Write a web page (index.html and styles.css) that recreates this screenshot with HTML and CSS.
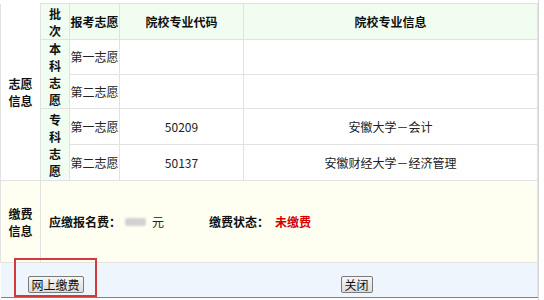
FILE: index.html
```html
<!DOCTYPE html>
<html lang="zh-CN">
<head>
    <meta charset="UTF-8">
    <title>志愿信息</title>
    <link rel="stylesheet" href="styles.css">
</head>
<body>
<div class="page">
    <table class="info-table">
        <colgroup>
            <col class="c-label">
            <col class="c-batch">
            <col class="c-choice">
            <col class="c-code">
            <col class="c-name">
        </colgroup>
        <tr class="head">
            <td rowspan="5" class="label top-open">志愿<br>信息</td>
            <th class="batch">批<br>次</th>
            <th>报考志愿</th>
            <th>院校专业代码</th>
            <th>院校专业信息</th>
        </tr>
        <tr class="r1">
            <td rowspan="2" class="batch">本<br>科<br>志<br>愿</td>
            <td>第一志愿</td>
            <td></td>
            <td></td>
        </tr>
        <tr class="r2">
            <td>第二志愿</td>
            <td></td>
            <td></td>
        </tr>
        <tr class="r3">
            <td rowspan="2" class="batch">专<br>科<br>志<br>愿</td>
            <td>第一志愿</td>
            <td>50209</td>
            <td>安徽大学－会计</td>
        </tr>
        <tr class="r4">
            <td>第二志愿</td>
            <td>50137</td>
            <td>安徽财经大学－经济管理</td>
        </tr>
        <tr class="pay">
            <td class="label">缴费<br>信息</td>
            <td colspan="4" class="pay-cell">
                <div class="pay-line">
                    <div class="fee">
                        <b>应缴报名费：</b><span class="blur"></span><span class="yuan">元</span>
                    </div>
                    <div class="status">
                        <b>缴费状态：</b><span class="unpaid">未缴费</span>
                    </div>
                </div>
            </td>
        </tr>
        <tr class="foot">
            <td colspan="5">
                <div class="buttons">
                    <button class="btn btn-pay">网上缴费</button>
                    <button class="btn btn-close">关闭</button>
                </div>
            </td>
        </tr>
    </table>
    <div class="mark"></div>
</div>
</body>
</html>
```

FILE: styles.css
```css
* {
    font-family: "Noto Sans CJK SC", "Liberation Sans", sans-serif;
}
html, body {
    margin: 0;
    padding: 0;
    background: #ffffff;
}
.page {
    position: relative;
    width: 539px;
    height: 300px;
    border-right: 1px solid #d6d6d6;
    padding-top: 3px;
    box-sizing: border-box;
}
.info-table {
    width: 537px;
    border-collapse: collapse;
    table-layout: fixed;
    font-size: 12px;
    color: #222;
}
.c-label { width: 40px; }
.c-batch { width: 29px; }
.c-choice { width: 50px; }
.c-code { width: 124px; }
.c-name { width: 294px; }

.info-table td, .info-table th {
    border: 1px solid #e2e2e2;
    padding: 0;
    text-align: center;
    line-height: 15px;
}
.info-table th {
    font-weight: bold;
    color: #111;
    background: #f0fdf0;
}
.top-open {
    border-top: 0 !important;
}
.label {
    font-weight: bold;
    color: #111;
    line-height: 17px !important;
}
.info-table .batch {
    background: #f0fdf0;
    font-weight: bold;
    color: #111;
    line-height: 17px;
}
.head { height: 36px; }
.r1 { height: 34px; }
.r2 { height: 34px; }
.r3 { height: 36px; }
.r4 { height: 36px; }

.pay { height: 82px; }
.pay td {
    background: #fffff1;
}
.pay-cell {
    text-align: left !important;
    padding-left: 8px !important;
}
.pay-line {
    display: flex;
    align-items: center;
}
.fee {
    width: 160px;
    display: flex;
    align-items: center;
}
.fee b, .status b {
    color: #111;
}
.blur {
    display: inline-block;
    width: 21px;
    height: 8px;
    margin-left: 4px;
    background: #d2d2d2;
    border-radius: 2px;
    filter: blur(1px);
}
.yuan {
    margin-left: 6px;
}
.unpaid {
    margin-left: 6px;
    color: #d40000;
    font-weight: bold;
}

.foot { height: 35px; }
.foot td {
    background: #eef5fc;
    border-bottom: 1px solid #808080;
    border-left: 0;
}
.buttons {
    display: flex;
    align-items: center;
    padding-top: 8px;
    padding-left: 27px;
}
.btn {
    font-size: 12px;
    line-height: 13px;
    height: 17px;
    padding: 0 3px;
    color: #111;
    border: 1px solid #7a7a7a;
    border-radius: 2px;
    background: linear-gradient(#f6f6f6, #dcdcdc);
}
.btn-pay { width: 56px; }
.btn-close {
    width: 32px;
    margin-left: 257px;
}
.mark {
    position: absolute;
    left: 14px;
    top: 258px;
    width: 79px;
    height: 35px;
    border: 2px solid #d23a3a;
}
```
